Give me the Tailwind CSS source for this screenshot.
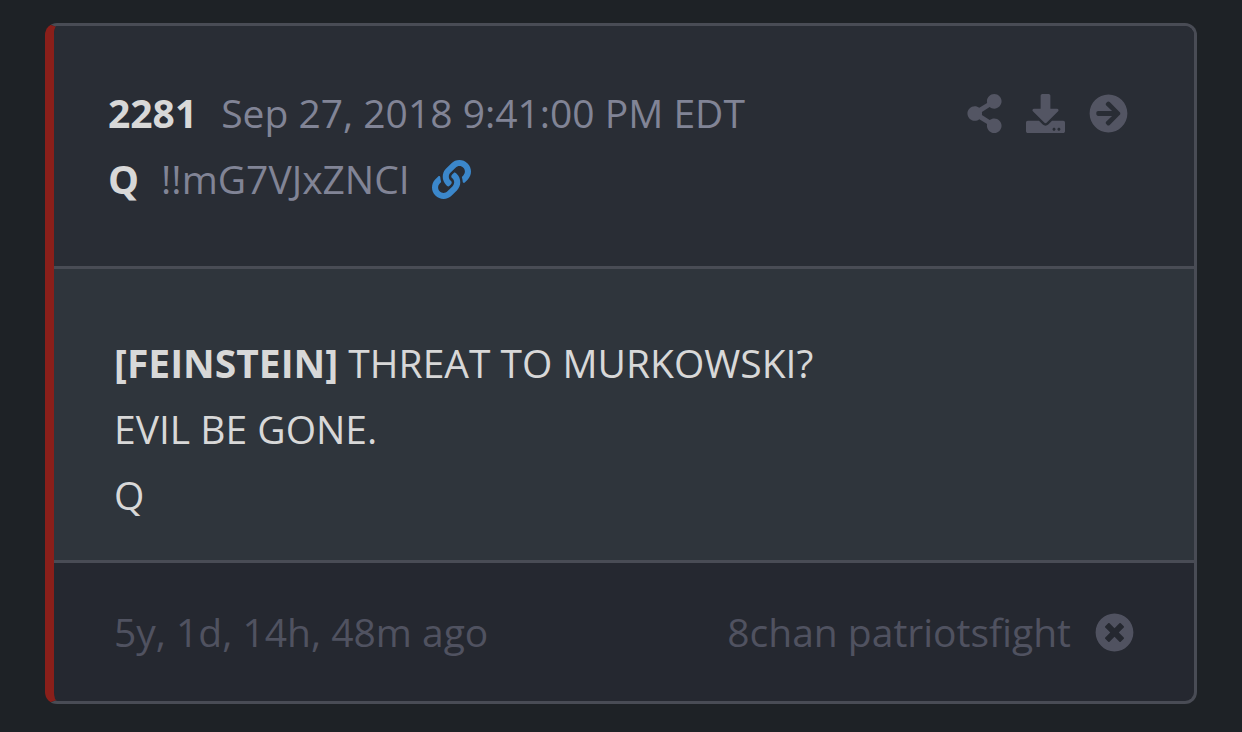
<!DOCTYPE html>
<html lang="en">
<head>
<meta charset="utf-8">
<meta name="viewport" content="width=device-width, initial-scale=1">
<title>Post 2281</title>
<script src="https://cdn.jsdelivr.net/npm/@tailwindcss/browser@4"></script>
</head>
<body class="min-h-screen bg-[#1e2226] px-[45px] pt-[23px] pb-7 font-['Open_Sans','Noto_Sans',sans-serif] text-[39px] leading-[66px] text-[#d8d8d8]">
<article class="overflow-hidden rounded-[12px] border-[3px] border-l-[9px] border-[#494c55] border-l-[#8a1f1a] bg-[#252830]">
  <header class="flex items-start justify-between border-b-[3px] border-[#494c55] bg-[#292d35] pt-[54px] pr-[66px] pb-[54px] pl-[54px]">
    <div class="text-[#818496]">
      <div class="flex gap-6"><strong class="font-bold text-[#d8d8d8]">2281</strong><time datetime="2018-09-27T21:41:00-04:00">Sep 27, 2018 9:41:00 PM EDT</time></div>
      <div class="flex items-center gap-[22px]"><strong class="font-bold text-[#d8d8d8]">Q</strong><span>!!mG7VJxZNCI</span>
        <a href="#post" aria-label="Link to post" class="text-[#3b87cb]"><svg class="size-[39px]" viewBox="0 0 512 512" fill="currentColor" aria-hidden="true"><path d="M326.612 185.391c59.747 59.809 58.927 155.698.36 214.59-.11.12-.24.25-.36.37l-67.2 67.2c-59.27 59.27-155.699 59.262-214.96 0-59.27-59.26-59.27-155.7 0-214.96l37.106-37.106c9.84-9.84 26.786-3.3 27.294 10.606.648 17.722 3.826 35.527 9.69 52.721 1.986 5.822.567 12.262-3.783 16.612l-13.087 13.087c-28.026 28.026-28.905 73.66-1.155 101.96 28.024 28.579 74.086 28.749 102.325.51l67.2-67.19c28.191-28.191 28.073-73.757 0-101.83-3.701-3.694-7.429-6.564-10.341-8.569a16.037 16.037 0 0 1-6.947-12.606c-.396-10.567 3.348-21.456 11.698-29.806l21.054-21.055c5.521-5.521 14.182-6.199 20.584-1.731a152.482 152.482 0 0 1 20.522 17.197zM467.547 44.449c-59.261-59.262-155.69-59.27-214.96 0l-67.2 67.2c-.12.12-.25.25-.36.37-58.566 58.892-59.387 154.781.36 214.59a152.454 152.454 0 0 0 20.521 17.196c6.402 4.468 15.064 3.789 20.584-1.731l21.054-21.055c8.35-8.35 12.094-19.239 11.698-29.806a16.037 16.037 0 0 0-6.947-12.606c-2.912-2.005-6.64-4.875-10.341-8.569-28.073-28.073-28.191-73.639 0-101.83l67.2-67.19c28.239-28.239 74.3-28.069 102.325.51 27.75 28.3 26.872 73.934-1.155 101.96l-13.087 13.087c-4.35 4.35-5.769 10.79-3.783 16.612 5.864 17.194 9.042 34.999 9.69 52.721.509 13.906 17.454 20.446 27.294 10.606l37.106-37.106c59.271-59.259 59.271-155.699.001-214.959z"/></svg></a>
      </div>
    </div>
    <div class="flex h-[66px] items-center gap-6 text-[#535563]">
      <button type="button" aria-label="Share"><svg class="h-[39px] w-[35px]" viewBox="0 0 448 512" fill="currentColor" aria-hidden="true"><path d="M352 320c-22.608 0-43.387 7.819-59.79 20.895l-102.486-64.054a96.551 96.551 0 0 0 0-41.683l102.486-64.054C308.613 184.181 329.392 192 352 192c53.019 0 96-42.981 96-96S405.019 0 352 0s-96 42.981-96 96c0 7.158.79 14.13 2.276 20.841L155.79 180.895C139.387 167.819 118.608 160 96 160c-53.019 0-96 42.981-96 96s42.981 96 96 96c22.608 0 43.387-7.819 59.79-20.895l102.486 64.054A96.301 96.301 0 0 0 256 416c0 53.019 42.981 96 96 96s96-42.981 96-96-42.981-96-96-96z"/></svg></button>
      <button type="button" aria-label="Download"><svg class="size-[39px]" viewBox="0 0 512 512" fill="currentColor" aria-hidden="true"><path d="M216 0h80c13.3 0 24 10.7 24 24v168h87.7c17.8 0 26.7 21.5 14.1 34.1L269.7 378.3c-7.5 7.5-19.8 7.5-27.3 0L90.1 226.1c-12.6-12.6-3.7-34.1 14.1-34.1H192V24c0-13.3 10.7-24 24-24zm296 376v112c0 13.3-10.7 24-24 24H24c-13.3 0-24-10.7-24-24V376c0-13.3 10.7-24 24-24h146.7l49 49c20.1 20.1 52.5 20.1 72.6 0l49-49H488c13.3 0 24 10.7 24 24zm-124 88c0-11-9-20-20-20s-20 9-20 20 9 20 20 20 20-9 20-20zm64 0c0-11-9-20-20-20s-20 9-20 20 9 20 20 20 20-9 20-20z"/></svg></button>
      <a href="#next" aria-label="Open post"><svg class="size-[39px]" viewBox="0 0 512 512" fill="currentColor" aria-hidden="true"><path d="M256 8c137 0 248 111 248 248S393 504 256 504 8 393 8 256 119 8 256 8zm-28.9 143.6l75.5 72.4H120c-13.3 0-24 10.7-24 24v16c0 13.3 10.7 24 24 24h182.6l-75.5 72.4c-9.7 9.3-9.9 24.8-.4 34.3l11 10.9c9.4 9.4 24.6 9.4 33.9 0L404.3 273c9.4-9.4 9.4-24.6 0-33.9L271.6 106.3c-9.4-9.4-24.6-9.4-33.9 0l-11 10.9c-9.5 9.6-9.3 25.1.4 34.4z"/></svg></a>
    </div>
  </header>
  <div class="border-b-[3px] border-[#494c55] bg-[#2f353c] px-[60px] pt-[61px] pb-8">
    <p><strong class="font-bold">[FEINSTEIN]</strong> THREAT TO MURKOWSKI?</p>
    <p>EVIL BE GONE.</p>
    <p>Q</p>
  </div>
  <footer class="flex items-center justify-between px-[60px] py-9 text-[#505260]">
    <span>5y, 1d, 14h, 48m ago</span>
    <div class="flex items-center gap-6"><span>8chan patriotsfight</span>
      <a href="#source" aria-label="Source unavailable"><svg class="size-[39px]" viewBox="0 0 512 512" fill="currentColor" aria-hidden="true"><path d="M256 8C119 8 8 119 8 256s111 248 248 248 248-111 248-248S393 8 256 8zm121.6 313.1c4.7 4.7 4.7 12.3 0 17L338 377.6c-4.7 4.7-12.3 4.7-17 0L256 312l-65.1 65.6c-4.7 4.7-12.3 4.7-17 0L134.4 338c-4.7-4.7-4.7-12.3 0-17l65.6-65-65.6-65.1c-4.7-4.7-4.7-12.3 0-17l39.6-39.6c4.7-4.7 12.3-4.7 17 0l65 65.7 65.1-65.6c4.7-4.7 12.3-4.7 17 0l39.6 39.6c4.7 4.7 4.7 12.3 0 17L312 256l65.6 65.1z"/></svg></a>
    </div>
  </footer>
</article>
</body>
</html>
